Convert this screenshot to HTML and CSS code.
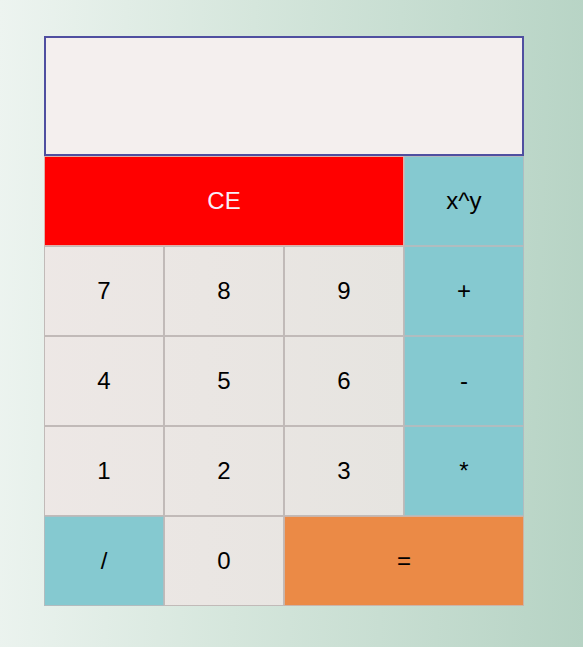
FILE: index.html
```html
<!DOCTYPE html>
<html lang="en">
<head>
<meta charset="utf-8">
<title>Calculator</title>
<link rel="stylesheet" href="styles.css">
</head>
<body>
<main class="calculator">
  <input class="display" type="text" aria-label="Display" readonly>
  <button class="key clear" type="button">CE</button>
  <button class="key operator" type="button">x^y</button>
  <button class="key" type="button">7</button>
  <button class="key" type="button">8</button>
  <button class="key" type="button">9</button>
  <button class="key operator" type="button">+</button>
  <button class="key" type="button">4</button>
  <button class="key" type="button">5</button>
  <button class="key" type="button">6</button>
  <button class="key operator" type="button">-</button>
  <button class="key" type="button">1</button>
  <button class="key" type="button">2</button>
  <button class="key" type="button">3</button>
  <button class="key operator" type="button">*</button>
  <button class="key operator" type="button">/</button>
  <button class="key" type="button">0</button>
  <button class="key equals" type="button">=</button>
</main>
</body>
</html>
```

FILE: styles.css
```css
* {
  box-sizing: border-box;
}

body {
  min-height: 100vh;
  margin: 0;
  padding: 36px 59px 41px 44px;
  background: linear-gradient(92deg, #edf4f0, #d5e6dc 42%, #b6d3c4);
}

.calculator {
  display: grid;
  grid-template-columns: repeat(4, 1fr);
  grid-template-rows: 120px;
  grid-auto-rows: 90px;
}

.display {
  grid-column: 1 / -1;
  width: 100%;
  padding: 0 16px;
  border: 2px solid #4f4fa0;
  border-radius: 0;
  outline: none;
  background: #f4efee;
  font: 40px "Liberation Sans", Arial, sans-serif;
  text-align: right;
}

.key {
  padding: 0;
  border: 1px solid #c1bab8;
  border-radius: 0;
  background: linear-gradient(to right, #eee8e6, #e6e4e0 70%) fixed;
  color: #000;
  font: 24px "Liberation Sans", Arial, sans-serif;
}

.clear {
  grid-column: span 3;
  border-color: #dfb0aa;
  background: #f00;
  color: #f8eef8;
}

.operator {
  border-color: #b1bcbf;
  background: #85c9d0;
}

.equals {
  grid-column: span 2;
  border-color: #cbb4a8;
  background: #eb8a46;
}
```
